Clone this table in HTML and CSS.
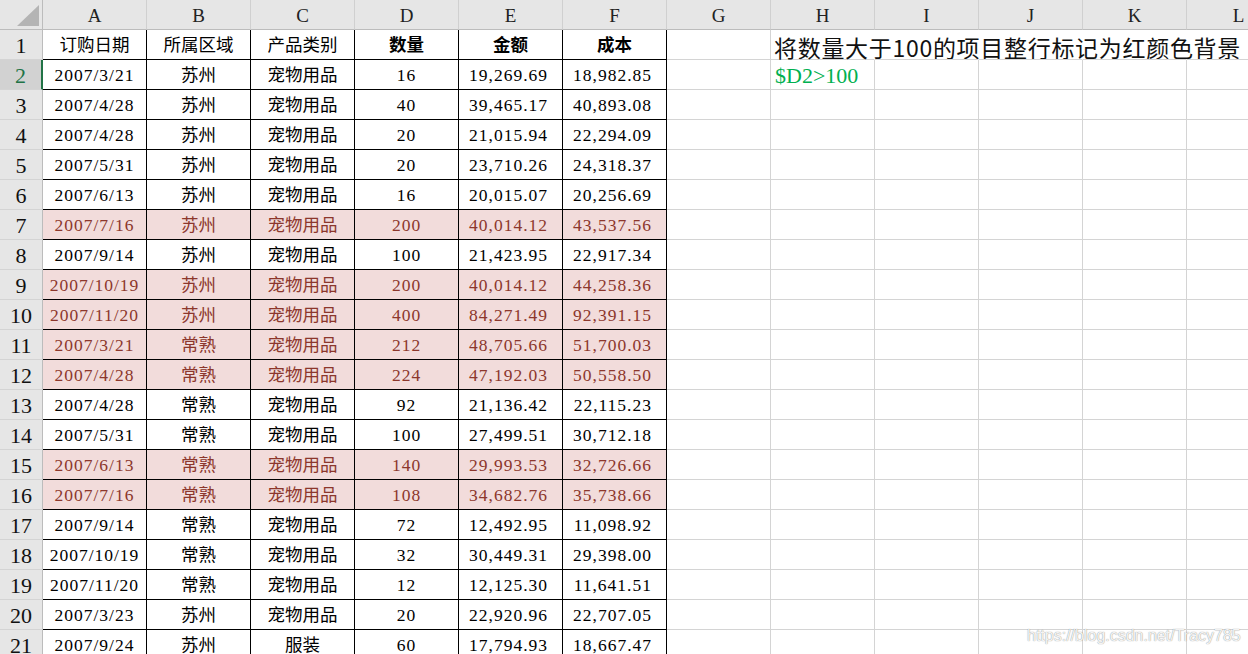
FILE: index.html
```html
<!DOCTYPE html>
<html lang="zh-CN">
<head>
<meta charset="utf-8">
<title>Sheet</title>
<link rel="stylesheet" href="styles.css">
</head>
<body>
<div class="sheet">
  <div class="row hdr">
    <div class="corner"><svg width="42" height="29" viewBox="0 0 42 29"><polygon points="39,5 39,26 17,26" fill="#b4b4b4"/></svg></div>
    <div class="ch">A</div><div class="ch">B</div><div class="ch">C</div><div class="ch">D</div><div class="ch">E</div><div class="ch">F</div><div class="ch">G</div><div class="ch">H</div><div class="ch">I</div><div class="ch">J</div><div class="ch">K</div><div class="ch">L</div>
  </div>
  <div class="row">
    <div class="rh">1</div>
    <div class="c t">订购日期</div><div class="c t">所属区域</div><div class="c t">产品类别</div><div class="c t b">数量</div><div class="c t b">金额</div><div class="c t b">成本</div>
    <div class="c"></div><div class="c nr"><span class="note">将数量大于100的项目整行标记为红颜色背景</span></div><div class="c nr"></div><div class="c nr"></div><div class="c nr"></div><div class="c"></div>
  </div>
  <div class="row">
    <div class="rh sel">2</div>
    <div class="c t n">2007/3/21</div><div class="c t">苏州</div><div class="c t">宠物用品</div><div class="c t n">16</div><div class="c t n r">19,269.69</div><div class="c t n r">18,982.85</div>
    <div class="c"></div><div class="c"><span class="formula">$D2&gt;100</span></div><div class="c"></div><div class="c"></div><div class="c"></div><div class="c"></div>
  </div>
  <div class="row">
    <div class="rh">3</div>
    <div class="c t n">2007/4/28</div><div class="c t">苏州</div><div class="c t">宠物用品</div><div class="c t n">40</div><div class="c t n r">39,465.17</div><div class="c t n r">40,893.08</div>
    <div class="c"></div><div class="c"></div><div class="c"></div><div class="c"></div><div class="c"></div><div class="c"></div>
  </div>
  <div class="row">
    <div class="rh">4</div>
    <div class="c t n">2007/4/28</div><div class="c t">苏州</div><div class="c t">宠物用品</div><div class="c t n">20</div><div class="c t n r">21,015.94</div><div class="c t n r">22,294.09</div>
    <div class="c"></div><div class="c"></div><div class="c"></div><div class="c"></div><div class="c"></div><div class="c"></div>
  </div>
  <div class="row">
    <div class="rh">5</div>
    <div class="c t n">2007/5/31</div><div class="c t">苏州</div><div class="c t">宠物用品</div><div class="c t n">20</div><div class="c t n r">23,710.26</div><div class="c t n r">24,318.37</div>
    <div class="c"></div><div class="c"></div><div class="c"></div><div class="c"></div><div class="c"></div><div class="c"></div>
  </div>
  <div class="row">
    <div class="rh">6</div>
    <div class="c t n">2007/6/13</div><div class="c t">苏州</div><div class="c t">宠物用品</div><div class="c t n">16</div><div class="c t n r">20,015.07</div><div class="c t n r">20,256.69</div>
    <div class="c"></div><div class="c"></div><div class="c"></div><div class="c"></div><div class="c"></div><div class="c"></div>
  </div>
  <div class="row hl">
    <div class="rh">7</div>
    <div class="c t n">2007/7/16</div><div class="c t">苏州</div><div class="c t">宠物用品</div><div class="c t n">200</div><div class="c t n r">40,014.12</div><div class="c t n r">43,537.56</div>
    <div class="c"></div><div class="c"></div><div class="c"></div><div class="c"></div><div class="c"></div><div class="c"></div>
  </div>
  <div class="row">
    <div class="rh">8</div>
    <div class="c t n">2007/9/14</div><div class="c t">苏州</div><div class="c t">宠物用品</div><div class="c t n">100</div><div class="c t n r">21,423.95</div><div class="c t n r">22,917.34</div>
    <div class="c"></div><div class="c"></div><div class="c"></div><div class="c"></div><div class="c"></div><div class="c"></div>
  </div>
  <div class="row hl">
    <div class="rh">9</div>
    <div class="c t n">2007/10/19</div><div class="c t">苏州</div><div class="c t">宠物用品</div><div class="c t n">200</div><div class="c t n r">40,014.12</div><div class="c t n r">44,258.36</div>
    <div class="c"></div><div class="c"></div><div class="c"></div><div class="c"></div><div class="c"></div><div class="c"></div>
  </div>
  <div class="row hl">
    <div class="rh">10</div>
    <div class="c t n">2007/11/20</div><div class="c t">苏州</div><div class="c t">宠物用品</div><div class="c t n">400</div><div class="c t n r">84,271.49</div><div class="c t n r">92,391.15</div>
    <div class="c"></div><div class="c"></div><div class="c"></div><div class="c"></div><div class="c"></div><div class="c"></div>
  </div>
  <div class="row hl">
    <div class="rh">11</div>
    <div class="c t n">2007/3/21</div><div class="c t">常熟</div><div class="c t">宠物用品</div><div class="c t n">212</div><div class="c t n r">48,705.66</div><div class="c t n r">51,700.03</div>
    <div class="c"></div><div class="c"></div><div class="c"></div><div class="c"></div><div class="c"></div><div class="c"></div>
  </div>
  <div class="row hl">
    <div class="rh">12</div>
    <div class="c t n">2007/4/28</div><div class="c t">常熟</div><div class="c t">宠物用品</div><div class="c t n">224</div><div class="c t n r">47,192.03</div><div class="c t n r">50,558.50</div>
    <div class="c"></div><div class="c"></div><div class="c"></div><div class="c"></div><div class="c"></div><div class="c"></div>
  </div>
  <div class="row">
    <div class="rh">13</div>
    <div class="c t n">2007/4/28</div><div class="c t">常熟</div><div class="c t">宠物用品</div><div class="c t n">92</div><div class="c t n r">21,136.42</div><div class="c t n r">22,115.23</div>
    <div class="c"></div><div class="c"></div><div class="c"></div><div class="c"></div><div class="c"></div><div class="c"></div>
  </div>
  <div class="row">
    <div class="rh">14</div>
    <div class="c t n">2007/5/31</div><div class="c t">常熟</div><div class="c t">宠物用品</div><div class="c t n">100</div><div class="c t n r">27,499.51</div><div class="c t n r">30,712.18</div>
    <div class="c"></div><div class="c"></div><div class="c"></div><div class="c"></div><div class="c"></div><div class="c"></div>
  </div>
  <div class="row hl">
    <div class="rh">15</div>
    <div class="c t n">2007/6/13</div><div class="c t">常熟</div><div class="c t">宠物用品</div><div class="c t n">140</div><div class="c t n r">29,993.53</div><div class="c t n r">32,726.66</div>
    <div class="c"></div><div class="c"></div><div class="c"></div><div class="c"></div><div class="c"></div><div class="c"></div>
  </div>
  <div class="row hl">
    <div class="rh">16</div>
    <div class="c t n">2007/7/16</div><div class="c t">常熟</div><div class="c t">宠物用品</div><div class="c t n">108</div><div class="c t n r">34,682.76</div><div class="c t n r">35,738.66</div>
    <div class="c"></div><div class="c"></div><div class="c"></div><div class="c"></div><div class="c"></div><div class="c"></div>
  </div>
  <div class="row">
    <div class="rh">17</div>
    <div class="c t n">2007/9/14</div><div class="c t">常熟</div><div class="c t">宠物用品</div><div class="c t n">72</div><div class="c t n r">12,492.95</div><div class="c t n r">11,098.92</div>
    <div class="c"></div><div class="c"></div><div class="c"></div><div class="c"></div><div class="c"></div><div class="c"></div>
  </div>
  <div class="row">
    <div class="rh">18</div>
    <div class="c t n">2007/10/19</div><div class="c t">常熟</div><div class="c t">宠物用品</div><div class="c t n">32</div><div class="c t n r">30,449.31</div><div class="c t n r">29,398.00</div>
    <div class="c"></div><div class="c"></div><div class="c"></div><div class="c"></div><div class="c"></div><div class="c"></div>
  </div>
  <div class="row">
    <div class="rh">19</div>
    <div class="c t n">2007/11/20</div><div class="c t">常熟</div><div class="c t">宠物用品</div><div class="c t n">12</div><div class="c t n r">12,125.30</div><div class="c t n r">11,641.51</div>
    <div class="c"></div><div class="c"></div><div class="c"></div><div class="c"></div><div class="c"></div><div class="c"></div>
  </div>
  <div class="row">
    <div class="rh">20</div>
    <div class="c t n">2007/3/23</div><div class="c t">苏州</div><div class="c t">宠物用品</div><div class="c t n">20</div><div class="c t n r">22,920.96</div><div class="c t n r">22,707.05</div>
    <div class="c"></div><div class="c"></div><div class="c"></div><div class="c"></div><div class="c"></div><div class="c"></div>
  </div>
  <div class="row">
    <div class="rh">21</div>
    <div class="c t n">2007/9/24</div><div class="c t">苏州</div><div class="c t">服装</div><div class="c t n">60</div><div class="c t n r">17,794.93</div><div class="c t n r">18,667.47</div>
    <div class="c"></div><div class="c"></div><div class="c"></div><div class="c"></div><div class="c"></div><div class="c"></div>
  </div>
</div>
<div class="watermark">https://blog.csdn.net/Tracy785</div>
</body>
</html>
```

FILE: styles.css
```css
html, body {
  margin: 0;
  padding: 0;
  background: #ffffff;
  overflow: hidden;
  width: 1248px;
  height: 654px;
}

body {
  position: relative;
  font-family: "Liberation Serif", "Noto Sans CJK SC", serif;
  color: #000;
}

.sheet {
  width: 1291px;
}

.row {
  display: grid;
  grid-template-columns: 43px repeat(12, 104px);
  height: 30px;
}

.row > div {
  box-sizing: border-box;
  height: 30px;
  white-space: nowrap;
}

.corner {
  background: #e6e6e6;
  border-right: 1px solid #bcbcbc;
  border-bottom: 1px solid #bcbcbc;
}

.corner svg {
  display: block;
}

.ch {
  background: #e6e6e6;
  border-right: 1px solid #d0d0d0;
  border-bottom: 1px solid #bcbcbc;
  text-align: center;
  font-size: 19px;
  line-height: 32px;
  color: #222;
}

.rh {
  background: #e6e6e6;
  border-right: 1px solid #bcbcbc;
  border-bottom: 1px solid #d4d4d4;
  text-align: center;
  font-size: 22px;
  line-height: 32px;
  color: #111;
}

.rh.sel {
  background: #d2d2d2;
  color: #217346;
  border-right: 2px solid #217346;
}

.c {
  border-right: 1px solid #d4d4d4;
  border-bottom: 1px solid #d4d4d4;
  text-align: center;
  font-size: 17.5px;
  line-height: 30px;
}

.c.t {
  border-right-color: #000;
  border-bottom-color: #000;
}

.c.n {
  letter-spacing: 1px;
  font-size: 17.5px;
}

.c.r {
  text-align: right;
  padding-right: 14px;
}

.c.b {
  font-weight: bold;
}

.c.nr {
  border-right-color: transparent;
  overflow: visible;
}

.hl .c.t {
  background: #f2dcdb;
  color: #8c372c;
}

.note {
  display: inline-block;
  font-family: "Noto Sans CJK SC", sans-serif;
  font-size: 23px;
  letter-spacing: 0.7px;
  line-height: 30px;
  margin-left: 3px;
  margin-top: 2px;
  color: #111;
}

.formula {
  display: block;
  text-align: left;
  padding-left: 4px;
  font-size: 22px;
  line-height: 32px;
  color: #00b050;
}

.watermark {
  position: absolute;
  left: 1027px;
  top: 626px;
  font-family: "Liberation Sans", sans-serif;
  font-size: 16px;
  line-height: 20px;
  color: rgba(255, 255, 255, 0.92);
  text-shadow: 0 0 1px rgba(0, 0, 0, 0.35), 0 0 1px rgba(0, 0, 0, 0.25);
}
```
